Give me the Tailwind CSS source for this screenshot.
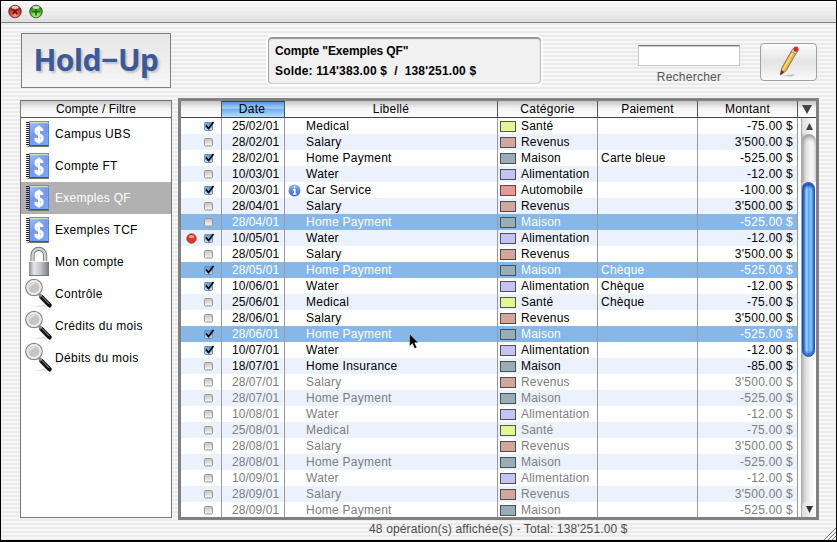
<!DOCTYPE html>
<html lang="fr">
<head>
<meta charset="utf-8">
<title>Hold-Up</title>
<script src="https://cdn.jsdelivr.net/npm/@tailwindcss/browser@4"></script>
</head>
<body class="m-0 overflow-hidden">
<svg width="0" height="0" class="absolute">
  <defs>
    <linearGradient id="blueBook" x1="0" y1="0" x2="0.6" y2="1"><stop offset="0" stop-color="#a9c3fb"/><stop offset="0.5" stop-color="#6f99f2"/><stop offset="1" stop-color="#7ba6fa"/></linearGradient>
    <linearGradient id="metal" x1="0" x2="1"><stop offset="0" stop-color="#8c8c92"/><stop offset="0.25" stop-color="#e4e4ea"/><stop offset="0.6" stop-color="#c0c0c8"/><stop offset="1" stop-color="#77777f"/></linearGradient>
    <linearGradient id="boxOn" x1="0" y1="0" x2="0" y2="1"><stop offset="0" stop-color="#5a94cf"/><stop offset="1" stop-color="#b8e4fb"/></linearGradient>
    <linearGradient id="boxOff" x1="0" y1="0" x2="0" y2="1"><stop offset="0" stop-color="#c4c4c4"/><stop offset="0.5" stop-color="#dcdcdc"/><stop offset="1" stop-color="#fafafa"/></linearGradient>
    <radialGradient id="redBall" cx="0.5" cy="0.8" r="0.8"><stop offset="0" stop-color="#ff9a8a"/><stop offset="0.5" stop-color="#d8453a"/><stop offset="1" stop-color="#6b1512"/></radialGradient>
    <radialGradient id="greenBall" cx="0.5" cy="0.8" r="0.8"><stop offset="0" stop-color="#b4ff80"/><stop offset="0.5" stop-color="#5cbd38"/><stop offset="1" stop-color="#17500c"/></radialGradient>
    <linearGradient id="infoBlue" x1="0" y1="0" x2="0" y2="1"><stop offset="0" stop-color="#8fb2f2"/><stop offset="1" stop-color="#2c62d2"/></linearGradient>
    <symbol id="book" viewBox="0 0 26 28">
      <path d="M0 27h5l1-1H2z" fill="#aaa"/>
      <path d="M4 1h20v3H4z" fill="#8b8b8b"/><path d="M5 2.500h18" stroke="#ddd" stroke-width="1"/>
      <path d="M2.500 2v23" stroke="#222" stroke-width="3" stroke-dasharray="1 1"/>
      <rect x="4" y="3" width="20" height="23" fill="url(#blueBook)"/>
      <path d="M4.500 3v22.500H23.500" fill="none" stroke="#2f4fae" stroke-width="1"/>
      <path d="M23.500 4v21" stroke="#5b83dd"/>
      <path d="M3 26.500h21" stroke="#777" stroke-width="1"/>
      <path d="M17 11.200c-.2-2-1.300-3.200-3-3.200-1.800 0-3 1.200-3 3.100 0 4.200 6.200 3 6.200 7 0 2-1.200 3.300-3.200 3.300-1.900 0-3.100-1.200-3.300-3.400" fill="none" stroke="#fff" stroke-width="3"/><path d="M14 5.800v17.800" stroke="#fff" stroke-width="2"/>
    </symbol>
    <symbol id="lock" viewBox="0 0 24 32">
      <path d="M5.500 16V9.200a6.300 6.300 0 0 1 12.600 0V16" fill="none" stroke="#77777d" stroke-width="4.200"/>
      <path d="M5.500 16V9.200a6.300 6.300 0 0 1 12.600 0V16" fill="none" stroke="#d2d2d8" stroke-width="2.400"/>
      <rect x="2" y="15" width="20" height="15" rx="1" fill="url(#metal)"/>
      <path d="M2 15.500h20" stroke="#f4f4f6"/><path d="M2 29.500h20" stroke="#77777d"/>
    </symbol>
    <symbol id="loupe" viewBox="0 0 28 32">
      <path d="M9 29h14l-2-3z" fill="#e4e4e4"/>
      <path d="M17.500 19l8 8.300" stroke="#111" stroke-width="4.400" stroke-linecap="round"/>
      <path d="M18 18.500l7 7.300" stroke="#aaa" stroke-width="1"/>
      <path d="M14.500 15.500l3 3" stroke="#888" stroke-width="2.500"/>
      <circle cx="10" cy="9.500" r="8.200" fill="#fafafa" stroke="#858585" stroke-width="1.300"/>
      <circle cx="10" cy="9.500" r="6.900" fill="none" stroke="#e4e4e4" stroke-width="1.200"/>
      <circle cx="10" cy="9.500" r="5.700" fill="#c6c6c6"/>
      <path d="M6 9.500a4 4 0 0 1 5-4" stroke="#e6e6e6" fill="none" stroke-width="1.500"/>
    </symbol>
    <symbol id="on" viewBox="0 0 13 12">
      <rect x="1.500" y="2.500" width="8" height="8" rx="1" fill="url(#boxOn)" stroke="#6d8fb8"/>
      <path d="M3 5.500l2.500 3L10.500 2" fill="none" stroke="#000" stroke-width="1.800"/>
    </symbol>
    <symbol id="off" viewBox="0 0 13 12">
      <rect x="1.500" y="2.500" width="8" height="7.500" rx="1.200" fill="url(#boxOff)" stroke="#959595"/>
    </symbol>
  </defs>
</svg>

<div id="win" class="w-[837px] h-[542px] border border-black border-b-2 flex flex-col relative font-['Liberation_Sans',Arial,sans-serif] text-[12px] leading-[16px] tracking-[0.25px] text-black bg-[repeating-linear-gradient(to_bottom,#f7f7f7_0px,#f7f7f7_2px,#eaeaea_2px,#eaeaea_4px)]">
  <header class="h-[22px] shrink-0 border-b border-[#808080] flex items-start pt-[3px] pl-[7px] gap-[7px] bg-linear-to-b from-white/60 to-[#d8d8d8]/70">
    <svg width="14" height="15" viewBox="0 0 14 15"><circle cx="7" cy="7.500" r="6.300" fill="url(#redBall)" stroke="#5a2a2a" stroke-width=".8"/><path d="M4.500 5.200l5 5m0-5l-5 5" stroke="#7b1512" stroke-width="1.700"/><ellipse cx="7" cy="3.300" rx="3.600" ry="1.600" fill="#fff" fill-opacity=".75"/></svg>
    <svg width="14" height="15" viewBox="0 0 14 15"><circle cx="7" cy="7.500" r="6.300" fill="url(#greenBall)" stroke="#2a4a2a" stroke-width=".8"/><path d="M7 4v7.500M3.300 7.700h7.400" stroke="#1b6a10" stroke-width="1.800"/><ellipse cx="7" cy="3.300" rx="3.600" ry="1.600" fill="#fff" fill-opacity=".75"/></svg>
  </header>

  <div class="h-[74px] shrink-0 flex items-start pl-[20px]">
    <div class="mt-[10px] w-[150px] h-[55px] border border-[#808080] bg-linear-to-b from-[#e6e6e6] to-[#f6f6f6] flex items-center justify-center font-['Noto_Sans','DejaVu_Sans',sans-serif] font-bold text-[30px] leading-[30px] tracking-[-0.5px] text-[#3c5999] [text-shadow:2px_2px_2px_#c4c4c4]"><span class="whitespace-nowrap -mt-[2px]">Hold−Up</span></div>
    <div class="ml-[95px] mt-[12px] w-[277px] h-[51px] rounded-[6px] border-2 border-white bg-[#f1f1f1] shadow-[inset_0_2px_1px_#939393,inset_1px_0_1px_#a4a4a4,inset_-1px_0_1px_#bbb,inset_0_-1px_1px_#d4d4d4] pl-[7px] pt-[4px] font-bold leading-[20px] whitespace-pre"><div class="tracking-[-0.1px]">Compte "Exemples QF"</div><div class="tracking-[0.17px]">Solde: 114'383.00 $  /  138'251.00 $</div></div>
    <div class="ml-[95px] mt-[22px] flex flex-col items-center">
      <div class="w-[102px] h-[21px] bg-white border border-[#c4c4c4] border-t-[#777] shadow-[inset_0_1px_0_#ccc]"></div>
      <div class="mt-[3px] text-[#555]">Rechercher</div>
    </div>
    <div class="ml-[20px] mt-[20px] w-[57px] h-[38px] rounded-[4px] border border-[#a0a0a0] bg-linear-to-b from-[#fdfdfd] via-[#e4e4e4] to-[#fafafa] flex justify-center items-center">
      <svg width="28" height="32" viewBox="0 0 28 32"><path d="M7 30l13-2-3 2.500z" fill="#bbb"/><path d="M5.500 29l1-6.500L16.500 5l4.500 2.500L11 24.800z" fill="#e8b54a" stroke="#8b5a1c" stroke-width=".8"/><path d="M8.300 23.500L18 6.500" stroke="#fbe08c" stroke-width="1.500"/><path d="M5.200 29.300l.9-5.300 3.200 1.900z" fill="#5c3a1c"/><path d="M16.200 5.500l1.700-3 4.600 2.600-1.700 3z" fill="#d5dce6" stroke="#555" stroke-width=".6"/><circle cx="21" cy="3.200" r="2.600" fill="#e02a20"/></svg>
    </div>
  </div>

  <main class="h-[422px] shrink-0 flex pl-[19px]">
    <aside class="mt-[3px] w-[152px] h-[418px] border border-[#777] bg-white overflow-hidden">
      <div class="h-[17px] border-b border-[#555] bg-[linear-gradient(#c4c4c4,#f4f4f4_45%,#fdfdfd)] text-center leading-[17px]"><span class="tracking-[0.1px]">Compte / Filtre</span></div>
      <div id="side"></div>
    </aside>
    <section class="ml-[6px] mt-[1px] w-[641px] h-[422px] border-[3px] border-[#808080] bg-white overflow-hidden">
      <div class="h-[17px] border-b border-[#444] flex text-center leading-[16px] bg-[linear-gradient(#c4c4c4,#f4f4f4_45%,#fdfdfd)]">
        <div class="w-[41px] border-r border-[#555]"></div>
        <div class="w-[63px] border-r border-[#555] border-t border-t-[#1d3fb0] leading-[15px] pr-[2px] bg-[linear-gradient(#5a93dc,#a5cdf5_40%,#6fb0f0_50%,#b5e0ff)]">Date</div>
        <div class="w-[213px] border-r border-[#555]">Libellé</div>
        <div class="w-[100px] border-r border-[#555]">Catégorie</div>
        <div class="w-[100px] border-r border-[#555]">Paiement</div>
        <div class="w-[100px] border-r border-[#555]">Montant</div>
        <div class="flex-1 flex items-center justify-center"><svg width="10" height="9" viewBox="0 0 10 9"><path d="M0 0h10L5 9z" fill="#444"/></svg></div>
      </div>
      <div class="flex h-[399px]">
        <div id="rows" class="w-[617px] shrink-0"></div>
        <div class="w-[3px] bg-white"></div>
        <div class="w-[15px] flex flex-col bg-[linear-gradient(to_right,#b8b8b8,#dedede_25%,#f5f5f5_60%,#fff)] border-l border-[#aaa]">
          <div class="h-[16px] flex items-center justify-center bg-linear-to-r from-[#ddd] to-white"><svg width="7" height="7" viewBox="0 0 7 7"><path d="M3.500 0L7 7H0z" fill="#444"/></svg></div>
          <div class="h-[48px] rounded-t-[7px] shadow-[inset_0_3px_4px_#999]"></div>
          <div class="h-[175px] w-[13px] rounded-[7px] border border-[#2448b0] bg-[linear-gradient(to_right,#2a5cd0,#6cb2f4_22%,#a5d4fb_32%,#58a2f2_52%,#86ccff_72%,#4c92e6)] shadow-[inset_0_3px_3px_#1f4cba,inset_0_-3px_3px_#2b6fd8]"></div>
          <div class="flex-1"></div>
          <div class="h-[16px] flex items-center justify-center bg-linear-to-r from-[#ddd] to-white rounded-t-[6px]"><svg width="7" height="7" viewBox="0 0 7 7"><path d="M3.500 7L7 0H0z" fill="#333"/></svg></div>
        </div>
      </div>
    </section>
  </main>
  <footer class="flex-1 pl-[368px] pt-[1px] leading-[18px] tracking-[0.15px] text-[#4c4c4c] whitespace-nowrap">48 opération(s) affichée(s) - Total: 138'251.00 $</footer>
  <svg class="absolute right-0 bottom-0" width="12" height="12" viewBox="0 0 12 12"><path d="M0 12L12 0M4 12l8-8M8 12l4-4" stroke="#777" stroke-width="1"/><path d="M1.500 12L12 1.500M5.500 12L12 5.500" stroke="#fff" stroke-width=".8"/></svg>
  <svg class="absolute left-[408px] top-[332px]" width="12" height="18" viewBox="0 0 12 18"><path d="M.6 1v12.200l2.800-2.600 2.200 5 2.200-1-2.200-4.800h3.800z" fill="#000" stroke="#fff" stroke-width=".4"/></svg>
</div>
<script>
var side = [["book","Campus UBS"],["book","Compte FT"],["book","Exemples QF"],["book","Exemples TCF"],["lock","Mon compte"],["loupe","Contrôle"],["loupe","Crédits du mois"],["loupe","Débits du mois"]];
var shape = {
  book: '<svg class="ml-[4px] mt-[2px] w-[26px] h-[28px]"><use href="#book"/></svg>',
  lock: '<svg class="ml-[6px] mt-0 w-[24px] h-[32px]"><use href="#lock"/></svg>',
  loupe: '<svg class="ml-[3px] mt-0 w-[28px] h-[32px]"><use href="#loupe"/></svg>'
};
document.getElementById("side").innerHTML = side.map(function (s, i) {
  return '<div class="h-[32px] flex ' + (i === 2 ? "bg-[#b1b1b1] text-white" : "") + '"><div class="w-[34px] shrink-0">' + shape[s[0]] + '</div><span class="leading-[32px] tracking-[0.3px]">' + s[1] + '</span></div>';
}).join("");
var kinds = {
  M: ["Medical", "Santé", "-75.00 $", "bg-[#dff890]"],
  S: ["Salary", "Revenus", "3'500.00 $", "bg-[#cfa79c]"],
  H: ["Home Payment", "Maison", "-525.00 $", "bg-[#97aeb6]"],
  W: ["Water", "Alimentation", "-12.00 $", "bg-[#c5c3f3]"],
  C: ["Car Service", "Automobile", "-100.00 $", "bg-[#ee9494]"],
  I: ["Home Insurance", "Maison", "-85.00 $", "bg-[#97aeb6]"]
};
var data = [["25/02","M",1],["28/02","S",0],["28/02","H",1,"Carte bleue"],["10/03","W",0],["20/03","C",1],["28/04","S",0],["28/04","H",0],["10/05","W",1],["28/05","S",0],["28/05","H",1,"Chèque"],["10/06","W",1,"Chèque"],["25/06","M",0,"Chèque"],["28/06","S",0],["28/06","H",1],["10/07","W",1],["18/07","I",0],["28/07","S",0],["28/07","H",0],["10/08","W",0],["25/08","M",0],["28/08","S",0],["28/08","H",0],["10/09","W",0],["28/09","S",0],["28/09","H",0]];
document.getElementById("rows").innerHTML = data.map(function (d, i) {
  var k = kinds[d[1]], sel = i === 6 || i === 9 || i === 13;
  var tone = sel ? "bg-[#86b7e7] text-white" : (i % 2 ? "bg-[#ecf2fd] " : "bg-white ") + (i > 15 ? "text-[#7d7d7d]" : "text-black");
  var ball = i === 7 ? '<svg class="w-[11px] h-[11px]" viewBox="0 0 11 11"><circle cx="5.500" cy="5.500" r="4.700" fill="#e0392c" stroke="#8e2a20" stroke-width=".8"/><ellipse cx="5.500" cy="3.500" rx="2.600" ry="1.500" fill="#fbb" fill-opacity=".8"/></svg>' : "";
  var info = i === 4 ? '<svg class="w-[13px] h-[13px]" viewBox="0 0 13 13"><circle cx="6.500" cy="6.500" r="6" fill="url(#infoBlue)"/><path d="M6.500 2.300v1.900M5 5.800h1.800v4M4.800 10h3.700" stroke="#fff" stroke-width="1.500" fill="none"/></svg>' : "";
  return '<div class="h-[16px] flex leading-[16px] whitespace-nowrap ' + tone + '">' +
    '<div class="w-[41px] border-r border-[#9a9a9a] flex items-center"><div class="w-[17px] pl-[5px] mr-[5px] shrink-0">' + ball + '</div><svg class="w-[13px] h-[12px] shrink-0 -mt-px"><use href="' + (d[2] ? "#on" : "#off") + '"/></svg></div>' +
    '<div class="w-[63px] border-r border-[#9a9a9a] pl-[10px] tracking-[0.05px]">' + d[0] + '/01</div>' +
    '<div class="w-[213px] border-r border-[#9a9a9a] flex items-center"><div class="w-[21px] pl-[3px] shrink-0">' + info + '</div>' + k[0] + '</div>' +
    '<div class="w-[100px] border-r border-[#9a9a9a] flex items-center"><i class="ml-[2px] mr-[5px] w-[16px] h-[11px] border border-[#444]/90 ' + k[3] + '"></i><span class="tracking-[0.2px]">' + k[1] + '</span></div>' +
    '<div class="w-[100px] border-r border-[#9a9a9a] pl-[3px]">' + (d[3] || "") + '</div>' +
    '<div class="w-[100px] border-r border-[#9a9a9a] pr-[4px] text-right">' + k[2] + '</div></div>';
}).join("");
</script>
</body>
</html>
